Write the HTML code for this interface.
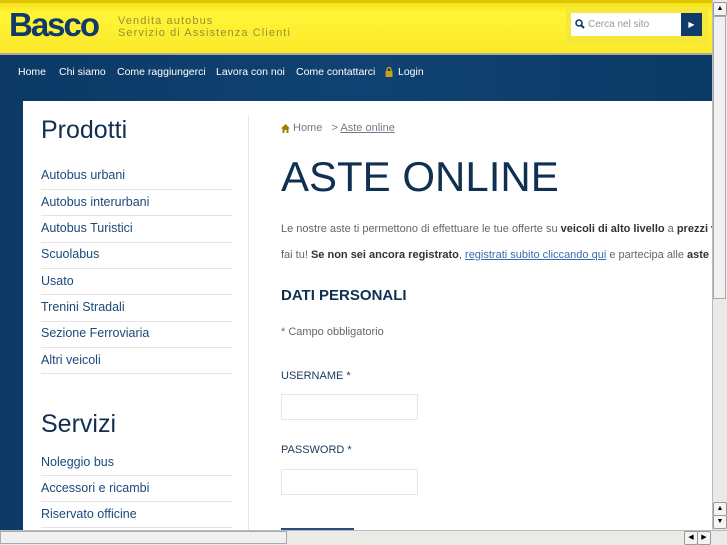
<!DOCTYPE html><html><head><style>
body{margin:0;width:727px;height:545px;overflow:hidden;position:relative;font-family:"Liberation Sans",sans-serif;background:#0d3a66}
.hdr{position:absolute;left:0;top:0;width:712px;height:53px;background:linear-gradient(#f3e21e,#fff536 20%,#fbe92a);border-top:3px solid #e0c400;box-sizing:border-box}
.logo{position:absolute;left:9px;top:6px;font-size:33px;font-weight:bold;color:#0f3a6a;letter-spacing:-2px}
.tag{position:absolute;left:118px;top:15px;font-size:11px;color:#9a8d3a;letter-spacing:1.1px;line-height:12px}
.sbox{position:absolute;left:566px;top:8px;width:142px;height:36px;background:#f6e838}
.sin{position:absolute;left:571px;top:13px;width:110px;height:23px;background:#fff;font-size:10px;color:#999;line-height:23px;box-sizing:border-box;padding-left:17px}
.sbt{position:absolute;left:681px;top:13px;width:21px;height:23px;background:#0f3a6a;color:#fff;font-size:8px;text-align:center;line-height:23px}
.gl{position:absolute;left:0;top:53px;width:712px;height:2px;background:#a9a9a0}
.nav{position:absolute;left:0;top:55px;width:712px;height:46px;background:linear-gradient(90deg,#0c3966,#0f4272 50%,#0c3a66)}
.nav span{position:absolute;top:11px;font-size:10.5px;color:#fff}
.main{position:absolute;left:23px;top:101px;width:689px;height:429px;background:#fff}
.side{position:absolute;left:41px;font-size:12.5px;color:#1a4a7a}
.sl{position:absolute;left:41px;width:191px;height:1px;background:#e3e3e3}
h2{position:absolute;margin:0;font-weight:normal;color:#0f3050;font-size:25px;left:41px}
.div{position:absolute;left:248px;top:115px;width:1px;height:415px;background:#e6e6e6}
.t{position:absolute;left:281px;font-size:11px;color:#666;white-space:nowrap}
.t b{color:#333}
.inp{position:absolute;left:281px;width:137px;height:26px;border:1px solid #e3e6ee;box-sizing:border-box}
.vs{position:absolute;left:712px;top:0;width:15px;height:530px;background:#eceae6;border-left:1px solid #bbb;box-sizing:border-box}
.hs{position:absolute;left:0;top:530px;width:727px;height:15px;background:#eceae6;border-top:1px solid #bbb;box-sizing:border-box}
.btn{position:absolute;width:12px;height:12px;border:1px solid #999;background:#f4f4f4;border-radius:2px;font-size:7px;text-align:center;line-height:12px;color:#000}
</style></head><body>
<div class="hdr"></div>
<div class="logo">Basco</div>
<div class="tag">Vendita autobus<br>Servizio di Assistenza Clienti</div>
<div class="sbox"></div><div class="sin">Cerca nel sito</div>
<svg style="position:absolute;left:575px;top:19px" width="10" height="10"><circle cx="4" cy="4" r="3" stroke="#0f3a6a" stroke-width="1.6" fill="none"/><line x1="6" y1="6" x2="9" y2="9" stroke="#0f3a6a" stroke-width="2"/></svg>
<div class="sbt">▶</div>
<div class="gl"></div>
<div class="nav"><span style="left:18px">Home</span><span style="left:59px">Chi siamo</span><span style="left:117px">Come raggiungerci</span><span style="left:216px">Lavora con noi</span><span style="left:296px">Come contattarci</span>
<svg style="position:absolute;left:385px;top:12px" width="8" height="10"><rect x="0.5" y="4" width="7" height="6" fill="#c9a020"/><path d="M2 4V2.5a2 2 0 0 1 4 0V4" stroke="#c9a020" stroke-width="1.3" fill="none"/></svg>
<span style="left:398px">Login</span></div>
<div class="main"></div>
<h2 style="top:116px">Prodotti</h2>
<div class="side" style="top:168px">Autobus urbani</div><div class="sl" style="top:189px"></div>
<div class="side" style="top:195px">Autobus interurbani</div><div class="sl" style="top:215px"></div>
<div class="side" style="top:221px">Autobus Turistici</div><div class="sl" style="top:242px"></div>
<div class="side" style="top:247px">Scuolabus</div><div class="sl" style="top:268px"></div>
<div class="side" style="top:274px">Usato</div><div class="sl" style="top:294px"></div>
<div class="side" style="top:300px">Trenini Stradali</div><div class="sl" style="top:321px"></div>
<div class="side" style="top:326px">Sezione Ferroviaria</div><div class="sl" style="top:347px"></div>
<div class="side" style="top:353px">Altri veicoli</div><div class="sl" style="top:373px"></div>
<h2 style="top:410px">Servizi</h2>
<div class="side" style="top:455px">Noleggio bus</div><div class="sl" style="top:475px"></div>
<div class="side" style="top:481px">Accessori e ricambi</div><div class="sl" style="top:501px"></div>
<div class="side" style="top:507px">Riservato officine</div><div class="sl" style="top:527px"></div>
<div class="div"></div>
<svg style="position:absolute;left:281px;top:124px" width="9" height="9"><path d="M0 4.5L4.5 0 9 4.5H7.5V9H5.5V6H3.5V9H1.5V4.5Z" fill="#a08000"/></svg>
<div class="t" style="top:122px;left:293px;color:#778">Home &nbsp;&nbsp;&gt; <u>Aste online</u></div>
<div class="t" style="top:153px;font-size:42px;color:#0f3050">ASTE ONLINE</div>
<div class="t" style="top:223px">Le nostre aste ti permettono di effettuare le tue offerte su <b>veicoli di alto livello</b> a <b>prezzi va</b></div>
<div class="t" style="top:249px">fai tu! <b>Se non sei ancora registrato</b>, <u style="color:#3a6ab0">registrati subito cliccando qui</u> e partecipa alle <b>aste</b></div>
<div class="t" style="top:287px;font-size:15px;font-weight:bold;color:#0f3050">DATI PERSONALI</div>
<div class="t" style="top:326px">* Campo obbligatorio</div>
<div class="t" style="top:370px;color:#1a3a5a">USERNAME *</div>
<div class="inp" style="top:394px"></div>
<div class="t" style="top:444px;color:#1a3a5a">PASSWORD *</div>
<div class="inp" style="top:469px"></div>
<div style="position:absolute;left:281px;top:528px;width:73px;height:2px;background:#2a4a7a"></div>
<div class="vs"></div>
<div class="btn" style="left:713px;top:2px">▲</div>
<div style="position:absolute;left:713px;top:16px;width:13px;height:283px;background:#f0f0f0;border:1px solid #aaa;box-sizing:border-box"></div>
<div class="btn" style="left:713px;top:502px">▲</div><div class="btn" style="left:713px;top:515px">▼</div>
<div class="hs"></div>
<div style="position:absolute;left:0;top:531px;width:287px;height:13px;background:#f0f0f0;border:1px solid #aaa;box-sizing:border-box"></div>
<div class="btn" style="left:684px;top:531px">◀</div><div class="btn" style="left:697px;top:531px">▶</div>
</body></html>
